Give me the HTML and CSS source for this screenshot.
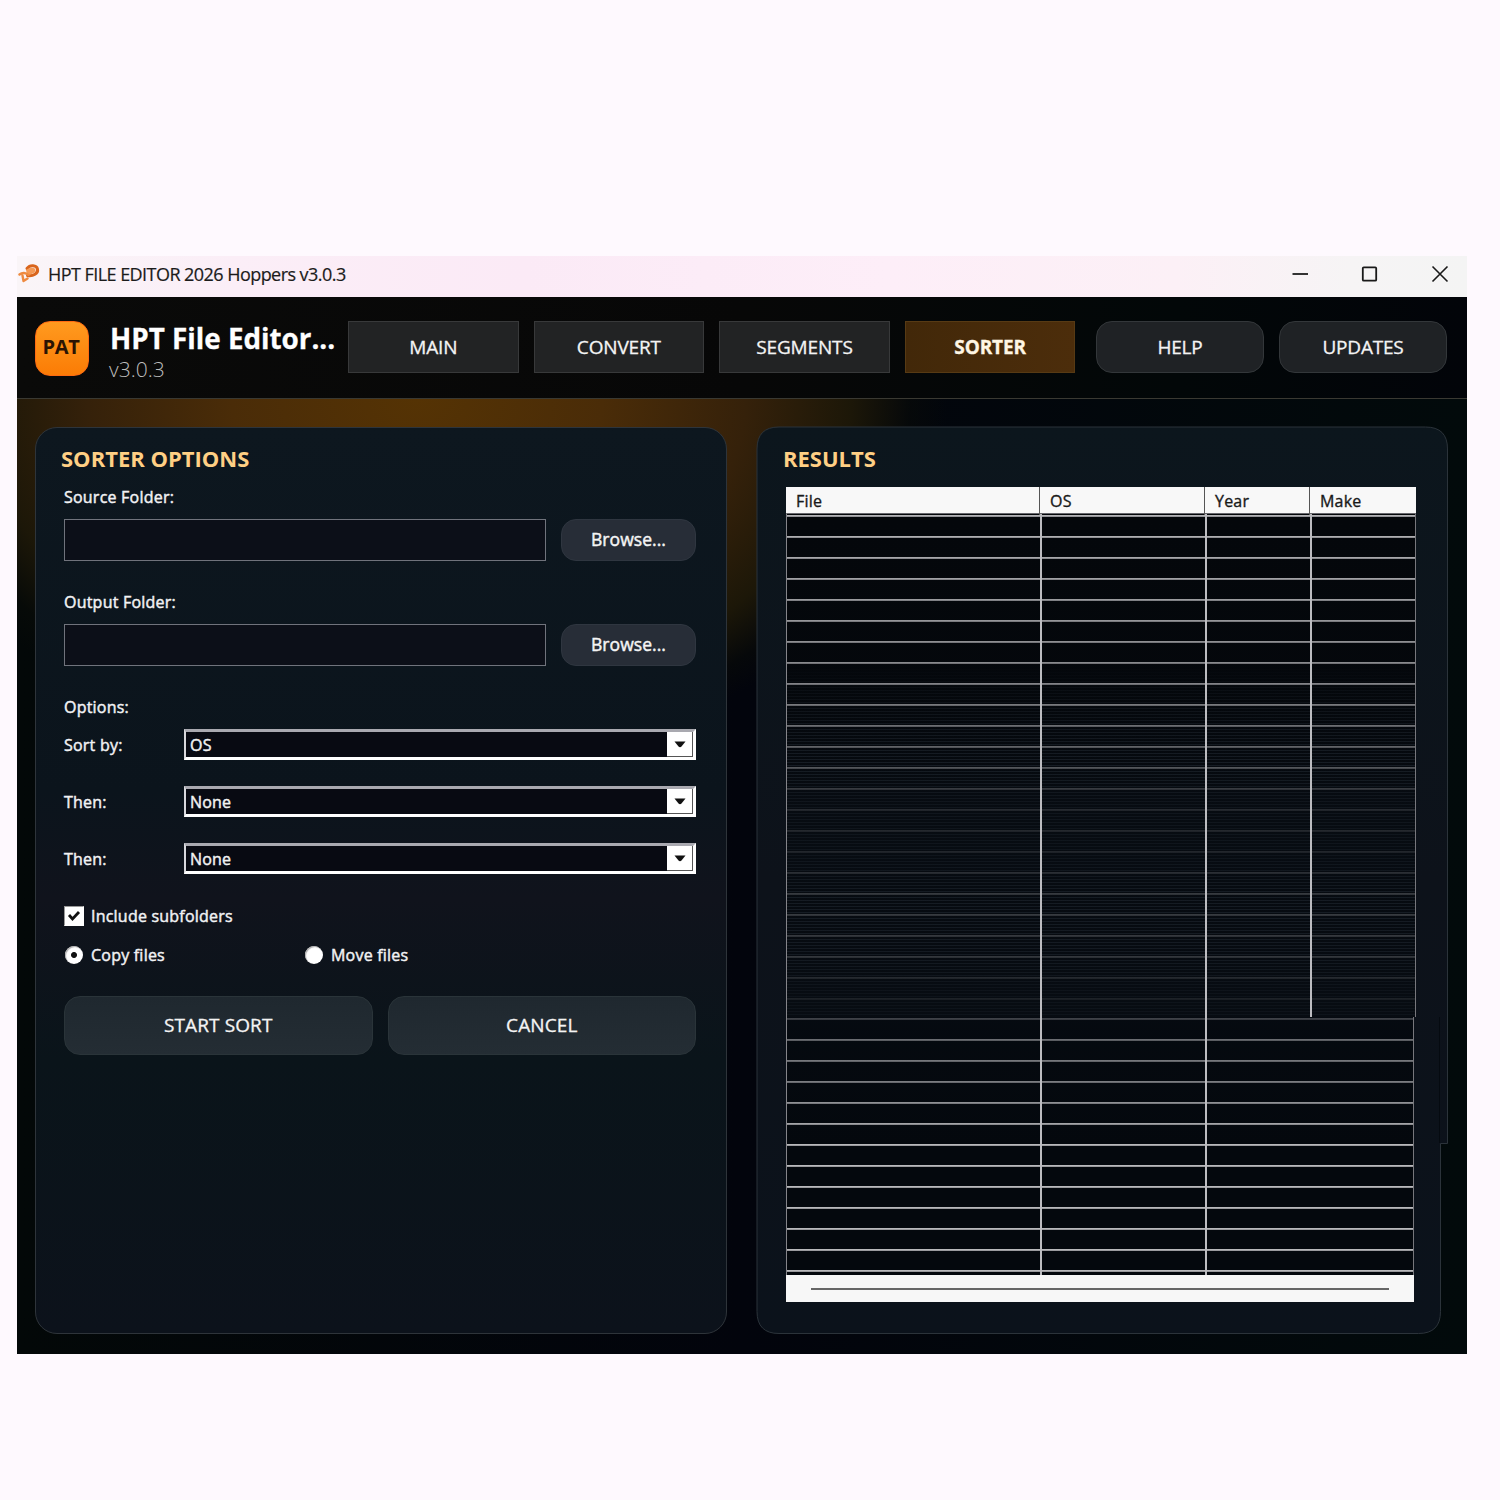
FILE: index.html
```html
<!DOCTYPE html>
<html lang="en">
<head>
<meta charset="utf-8">
<title>HPT File Editor</title>
<link rel="stylesheet" href="styles.css">
</head>
<body>
<div class="window">
  <div class="titlebar">
    <svg class="app-icon" width="22" height="22" viewBox="0 0 22 22" fill="none">
      <path d="M9 5.500C12 1.500 18.500 2 19.500 6C20.500 10.500 15 13.500 9.500 12.500" stroke="#d9651c" stroke-width="3" stroke-linecap="round"/>
      <path d="M8 7C12 4 17 4 17.500 7C17.500 10 13 12 9 11.500" fill="#f59a55"/>
      <path d="M10.500 12C8 9.500 4 9.500 1.500 11.500M4.500 12.500L5.500 18L9.500 15.500" stroke="#ee8a40" stroke-width="2.400" stroke-linecap="round" stroke-linejoin="round"/>
    </svg>
    <span class="window-title">HPT FILE EDITOR 2026 Hoppers v3.0.3</span>
    <div class="window-controls">
      <svg width="18" height="18" viewBox="0 0 18 18" stroke="#333" stroke-width="2"><path d="M1.500 9H17"/></svg>
      <svg width="18" height="18" viewBox="0 0 18 18" fill="none" stroke="#191919" stroke-width="1.800"><rect x="1.800" y="2.300" width="13.400" height="13.400" rx="1"/></svg>
      <svg width="18" height="18" viewBox="0 0 18 18" stroke="#191919" stroke-width="1.600"><path d="M1.500 1.500L16.500 16.500M16.500 1.500L1.500 16.500"/></svg>
    </div>
  </div>

  <header class="header">
    <div class="logo">PAT</div>
    <div class="brand">
      <div class="brand-name">HPT File Editor...</div>
      <div class="brand-version">v3.0.3</div>
    </div>
    <nav class="tabs">
      <button class="tab">MAIN</button>
      <button class="tab">CONVERT</button>
      <button class="tab">SEGMENTS</button>
      <button class="tab active">SORTER</button>
    </nav>
    <div class="actions">
      <button class="pill">HELP</button>
      <button class="pill">UPDATES</button>
    </div>
  </header>

  <main class="content">
    <section class="panel options">
      <h2 class="panel-title">SORTER OPTIONS</h2>
      <div class="field">
        <div class="label">Source Folder:</div>
        <div class="field-row"><div class="input"></div><button class="browse">Browse...</button></div>
      </div>
      <div class="field">
        <div class="label">Output Folder:</div>
        <div class="field-row"><div class="input"></div><button class="browse">Browse...</button></div>
      </div>
      <div class="label">Options:</div>
      <div class="selects">
        <div class="select-row"><span class="label">Sort by:</span><div class="select"><span>OS</span><i class="arrow"><svg width="12" height="7" viewBox="0 0 12 7"><path d="M0.500 0.500H11.500L7.500 5.500Q6 7 4.500 5.500Z" fill="#111"/></svg></i></div></div>
        <div class="select-row"><span class="label">Then:</span><div class="select"><span>None</span><i class="arrow"><svg width="12" height="7" viewBox="0 0 12 7"><path d="M0.500 0.500H11.500L7.500 5.500Q6 7 4.500 5.500Z" fill="#111"/></svg></i></div></div>
        <div class="select-row"><span class="label">Then:</span><div class="select"><span>None</span><i class="arrow"><svg width="12" height="7" viewBox="0 0 12 7"><path d="M0.500 0.500H11.500L7.500 5.500Q6 7 4.500 5.500Z" fill="#111"/></svg></i></div></div>
      </div>
      <div class="choice">
        <span class="checkbox"><svg width="14" height="12" viewBox="0 0 14 12" fill="none"><path d="M2 5L5.500 9L12 2" stroke="#111" stroke-width="2.800"/></svg></span>
        <span class="label">Include subfolders</span>
      </div>
      <div class="radios">
        <div class="choice"><span class="radio checked"></span><span class="label">Copy files</span></div>
        <div class="choice"><span class="radio"></span><span class="label">Move files</span></div>
      </div>
      <div class="buttons">
        <button class="big">START SORT</button>
        <button class="big">CANCEL</button>
      </div>
    </section>

    <section class="results">
      <svg class="results-frame" width="692" height="908" viewBox="0 0 692 908">
        <defs>
          <linearGradient id="panelFill" x1="0" y1="0" x2="0" y2="1">
            <stop offset="0" stop-color="#0c161d"/>
            <stop offset="0.500" stop-color="#0d121a"/>
            <stop offset="1" stop-color="#0b121b"/>
          </linearGradient>
        </defs>
        <path d="M22 0H668.500Q690.500 0 690.500 22V716.500H683.500V884.500Q683.500 906.500 661.500 906.500H22Q0 906.500 0 884.500V22Q0 0 22 0Z" fill="url(#panelFill)" stroke="#2b333a"/>
        <path d="M682.500 590V716" stroke="#050a10"/>
      </svg>
      <h2 class="panel-title">RESULTS</h2>
      <div class="table">
        <div class="table-head">
          <span>File</span><span>OS</span><span>Year</span><span>Make</span>
        </div>
        <div class="rows upper"><i></i><i></i><i></i><i></i></div>
        <div class="rows lower"><i></i><i></i><i></i></div>
        <div class="scrollbar"><i></i></div>
      </div>
    </section>
  </main>
</div>
</body>
</html>
```
FILE: styles.css
```css
* { box-sizing: border-box; }

body {
  margin: 0;
  width: 1500px;
  height: 1500px;
  overflow: hidden;
  padding: 256px 0 0 17px;
  background: #fef9fe;
  font-family: "Open Sans", "Noto Sans", sans-serif;
  color: #f2f2f2;
}

button {
  font: inherit;
  color: #f4f4f4;
  padding: 0 0 2px;
  margin: 0;
}

svg { display: block; }

.window {
  width: 1450px;
  height: 1098px;
  display: flex;
  flex-direction: column;
  background: #020508;
}

.titlebar {
  height: 41px;
  display: flex;
  align-items: center;
  padding: 0 18px 6px 1px;
  background: linear-gradient(90deg, #faf5f8 0, #fbeef7 15%, #fbeaf6 35%, #fdeef8 60%, #fcf0f6 80%, #f6f4f5 92%, #f4f4f4);
  color: #1b1b1b;
}
.window-title {
  margin-left: 8px;
  font-size: 18px;
  line-height: 24px;
  letter-spacing: -0.550px;
  white-space: nowrap;
  -webkit-text-stroke: 0.200px #1b1b1b;
}
.window-controls { margin-left: auto; display: flex; gap: 52px; }

.header {
  height: 102px;
  display: flex;
  padding: 24px 20px 0 18px;
  border-bottom: 1px solid #3a3932;
  background: linear-gradient(90deg, #0a0a09, #070707 50%, #020708 80%, #020409);
}
.logo {
  width: 54px;
  height: 55px;
  border-radius: 15px;
  border: 1px solid #ff6a10;
  background: linear-gradient(#ff9a1f, #fb7c05);
  color: #2b1403;
  font: 700 20px/50px "Open Sans", sans-serif;
  letter-spacing: -0.300px;
  text-indent: -2px;
  text-align: center;
}
.brand { width: 237px; margin-left: 21px; white-space: nowrap; }
.brand-name {
  font-size: 27.800px;
  line-height: 34px;
  font-weight: 700;
  color: #fff;
  -webkit-text-stroke: 0.300px #fff;
}
.brand-version {
  margin-left: -1px;
  font-size: 21px;
  line-height: 29px;
  font-weight: 300;
  color: #bdbdbd;
}
.tabs { display: flex; gap: 15px; margin-left: 1px; }
.tab {
  width: 170.600px;
  height: 52px;
  padding: 0;
  border: 1px solid #38393a;
  background: #222324;
  font-size: 19px;
  letter-spacing: -0.150px;
  -webkit-text-stroke: 0.300px currentColor;
}
.tab.active {
  border-color: #573a14;
  background: linear-gradient(90deg, #422809, #4c2d0b);
  font-weight: 700;
  color: #fff6e4;
}
.actions { display: flex; gap: 15px; margin-left: auto; }
.pill {
  width: 168px;
  height: 52px;
  padding: 0;
  border: 1px solid #33373a;
  border-radius: 16px;
  background: #1f2225;
  font-size: 19px;
  letter-spacing: -0.200px;
  -webkit-text-stroke: 0.300px currentColor;
}

.content {
  flex: 1;
  display: flex;
  gap: 30px;
  padding: 28px 18px 0;
  background:
    radial-gradient(ellipse 530px 370px at 400px 0, #553304 0, #4a2c08 35%, #35210a 62%, #1c1708 82%, rgba(10, 12, 8, 0.500) 93%, transparent 100%),
    linear-gradient(90deg, #030808, #02040c 50%, #020a0b);
}

.panel-title {
  margin: 0;
  font-size: 22px;
  line-height: 28px;
  font-weight: 700;
  color: #ffcf84;
  white-space: nowrap;
}

.options {
  width: 692px;
  height: 907px;
  padding: 16px 29px 0 28px;
  border: 1px solid #2e343a;
  border-radius: 22px;
  background: linear-gradient(#0d171f, #0b141c 40%, #10131c 52%, #0a141a 70%, #0c121b);
}
.options .panel-title { margin-left: -3px; padding-bottom: 3px; }
.label {
  font-size: 16px;
  line-height: 22px;
  letter-spacing: 0.220px;
  white-space: nowrap;
  color: #f2f2f4;
  -webkit-text-stroke: 0.450px currentColor;
}
.field { margin-top: 11px; height: 94px; }
.field-row { display: flex; gap: 15px; margin-top: 11px; }
.input {
  width: 482px;
  height: 42px;
  border: 1px solid #70737c;
  background: #0c0f18;
}
.browse {
  width: 135px;
  height: 42px;
  border: 1px solid #2f3640;
  border-radius: 15px;
  background: #272d37;
  font-size: 17.500px;
  letter-spacing: 0.050px;
  -webkit-text-stroke: 0.450px currentColor;
}
.options > .label { margin-top: 11px; }
.selects { display: flex; flex-direction: column; gap: 26px; margin-top: 11px; }
.select-row { display: flex; align-items: center; }
.select-row .label { width: 120px; }
.select {
  width: 512px;
  height: 31px;
  display: flex;
  align-items: center;
  justify-content: space-between;
  padding-left: 4px;
  border: 3px solid #fff;
  border-top-color: #a9a9b0;
  border-left: 2px solid #d8d8dc;
  background: #080a12;
  font-size: 16px;
  letter-spacing: 0.200px;
  -webkit-text-stroke: 0.450px currentColor;
}
.arrow {
  width: 26px;
  height: 25px;
  display: grid;
  place-items: center;
  background: #fff;
  border-right: 1px solid #555;
  border-bottom: 1px solid #555;
}
.choice { display: flex; align-items: center; gap: 7px; width: 240px; }
.selects + .choice { margin-top: 31px; }
.checkbox {
  width: 20px;
  height: 20px;
  display: grid;
  place-items: center;
  background: #fff;
  border: 1px solid #fff;
  border-top-color: #999;
  border-left-color: #999;
}
.radios { display: flex; margin-top: 17px; }
.radio {
  width: 18px;
  height: 18px;
  margin: 0 1px;
  border-radius: 50%;
  background: #fff;
  box-shadow: inset 1px 1px 1px #aaa;
}
.radio.checked { background: radial-gradient(circle, #111 2.500px, #fff 3.500px); }
.buttons { display: flex; gap: 15px; margin-top: 30px; }
.big {
  width: 308.500px;
  height: 59px;
  border: 1px solid #2a3439;
  border-radius: 16px;
  background: linear-gradient(#1f282f, #242d34);
  font-size: 19px;
  letter-spacing: 0.100px;
  -webkit-text-stroke: 0.300px currentColor;
}

.results {
  position: relative;
  width: 692px;
  height: 908px;
  padding: 17px 0 0 29px;
}
.results-frame { position: absolute; inset: 0; z-index: 0; overflow: visible; }
.results .panel-title, .table { position: relative; z-index: 1; }
.results .panel-title { margin-left: -3px; }
.table { width: 630px; margin-top: 15px; }
.table-head {
  height: 26px;
  display: grid;
  grid-template-columns: 254px 165px 105px 106px;
  background: #f8f8f8;
  color: #191919;
  font-size: 16px;
  line-height: 28px;
  letter-spacing: 0.200px;
  -webkit-text-stroke: 0.350px currentColor;
}
.table-head span { padding-left: 10px; border-right: 1px solid #555; }
.table-head span:last-child { border-right: 0; }
.rows {
  display: grid;
  border-left: 1px solid #85858a;
  border-right: 1px solid #77777c;
}
.rows i { border-right: 2px solid #bcbcc0; }
.rows i:last-child { border-right: 0; }
.upper {
  width: 630px;
  height: 504px;
  grid-template-columns: 255px 165px 105px 103px;
  border-top: 1px solid #66666b;
  background:
    linear-gradient(transparent 0, rgba(5, 9, 14, 0.300) 35%, rgba(8, 13, 19, 0.550) 50%, rgba(8, 13, 19, 0.820) 57%, rgba(8, 13, 19, 0.850) 68%, rgba(8, 13, 19, 0.720) 76%, rgba(8, 13, 19, 0.750) 88%, rgba(8, 13, 19, 0.880) 95%),
    repeating-linear-gradient(transparent 0, transparent 1px, #c4c4c6 1px, #85858a 3px, transparent 3px, transparent 21px),
    linear-gradient(#04070b 30%, rgba(4, 7, 11, 0) 60%),
    repeating-linear-gradient(#02050a 0, #02050a 2px, #38424e 2px, #38424e 3px);
}
.lower {
  width: 628px;
  height: 258px;
  grid-template-columns: 255px 165px 206px;
  background:
    linear-gradient(rgba(6, 11, 18, 0.700) 0, rgba(6, 11, 18, 0.400) 10%, rgba(6, 11, 18, 0.350) 25%, transparent 50%),
    repeating-linear-gradient(transparent 0, transparent 1px, #c8c8ca 1px, #8a8a8e 3px, transparent 3px, transparent 21px),
    #04080d;
}
.scrollbar {
  width: 628px;
  height: 27px;
  padding: 13px 25px 0;
  background: #f7f7f7;
}
.scrollbar i { display: block; height: 2px; background: #666; }
```
